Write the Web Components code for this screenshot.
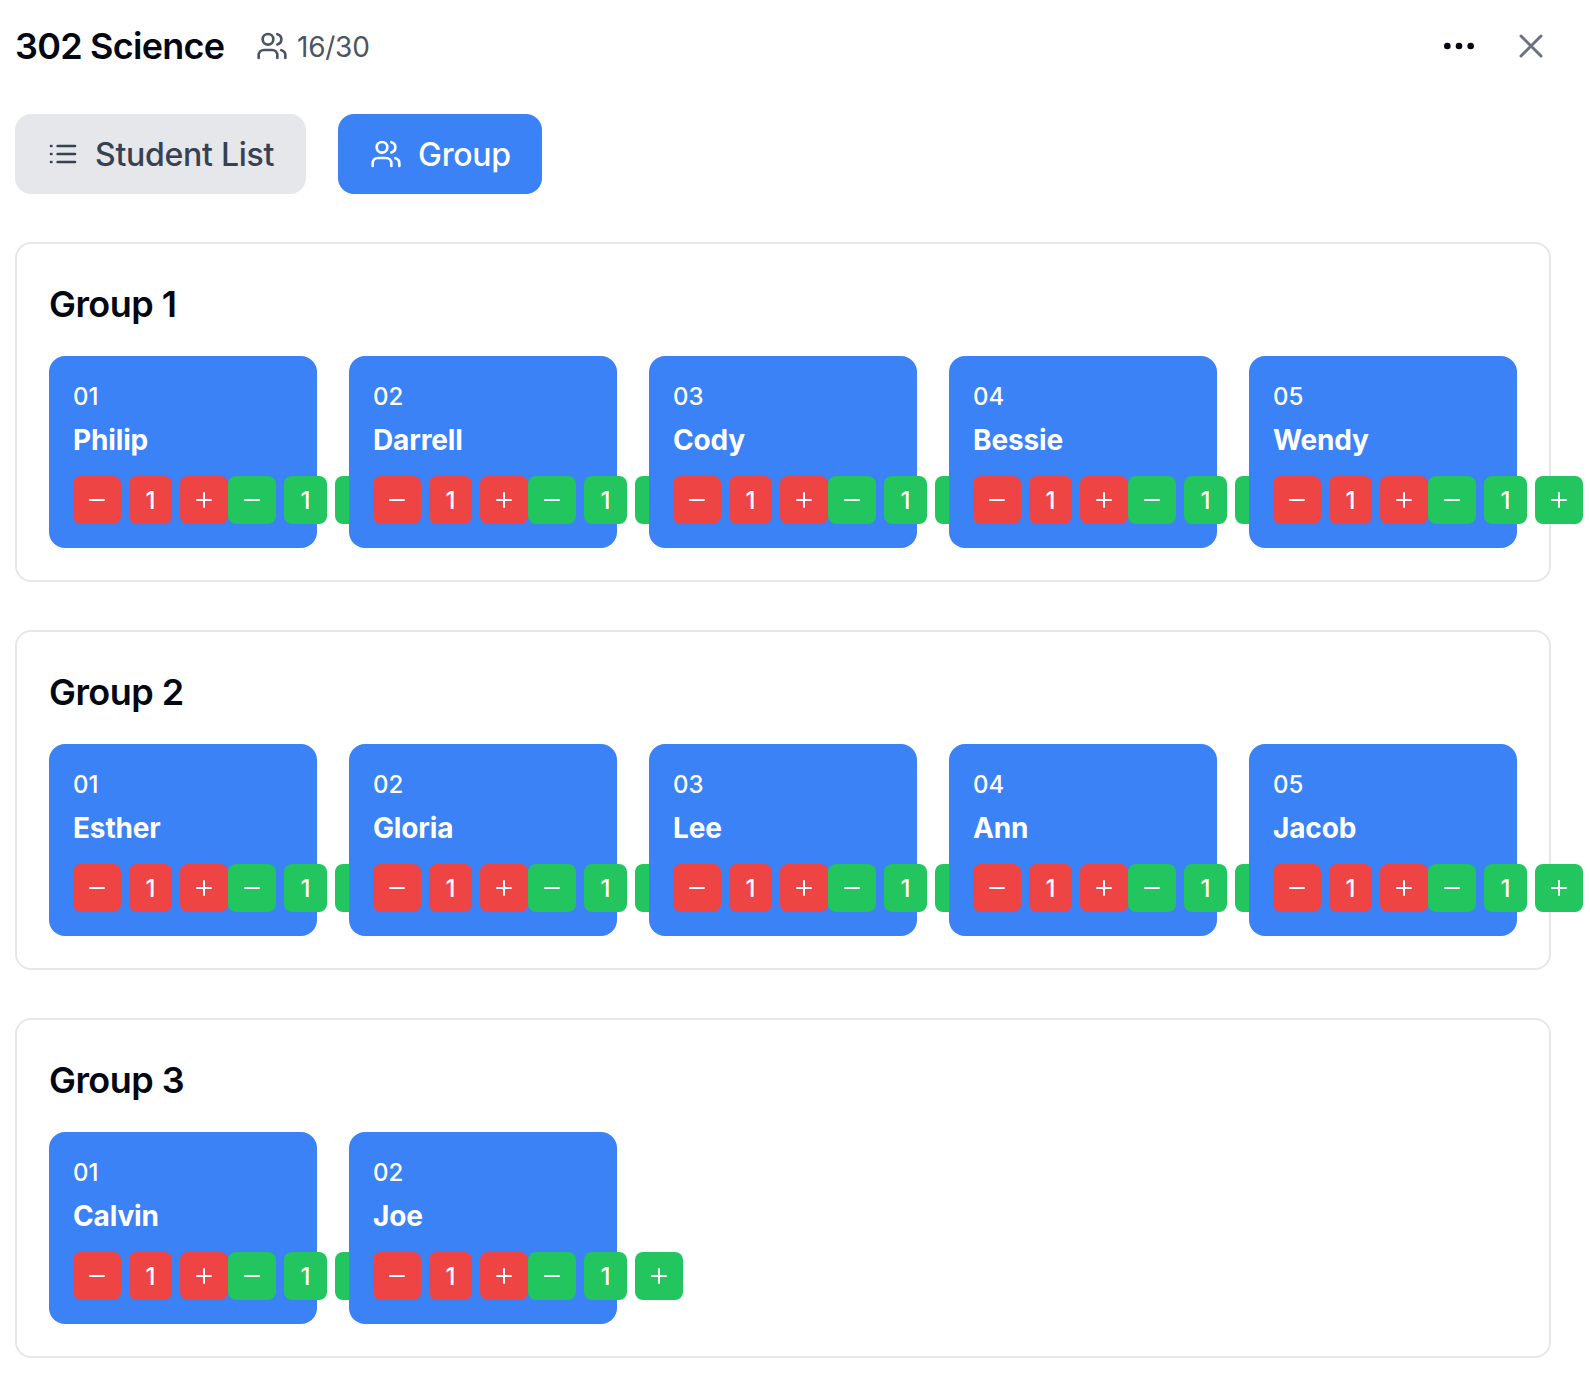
<!DOCTYPE html>
<html lang="en">
<head>
<meta charset="utf-8">
<title>302 Science</title>
<style>
html,body{margin:0;background:#fff}
body{font-family:Inter,"Liberation Sans",sans-serif;color:#030712;width:1590px;height:1380px;overflow:hidden}
</style>
</head>
<body>
<class-panel></class-panel>
<script>
const ICONS = {
  users: '<path d="M16 21v-2a4 4 0 0 0-4-4H6a4 4 0 0 0-4 4v2"/><circle cx="9" cy="7" r="4"/><path d="M22 21v-2a4 4 0 0 0-3-3.87"/><path d="M16 3.13a4 4 0 0 1 0 7.75"/>',
  list: '<path d="M8 6h13M8 12h13M8 18h13M3 6h.3M3 12h.3M3 18h.3"/>',
  more: '<g fill="currentColor"><circle cx="12" cy="12" r="1"/><circle cx="19" cy="12" r="1"/><circle cx="5" cy="12" r="1"/></g>',
  close: '<path d="M18 6 6 18M6 6l12 12"/>',
  minus: '<path d="M5 12h14"/>',
  plus: '<path d="M5 12h14M12 5v14"/>'
};
class Base extends HTMLElement {
  render(html) { this.attachShadow({mode: 'open'}).innerHTML = html; }
}
customElements.define('ui-icon', class extends Base {
  connectedCallback() {
    const s = this.getAttribute('size') || 24, w = this.getAttribute('weight') || 2;
    this.render(`<style>:host{display:block;flex:none;width:${s}px;height:${s}px}svg{display:block;width:100%;height:100%}</style>
    <svg viewBox="0 0 24 24" fill="none" stroke="currentColor" stroke-width="${w}" stroke-linecap="round" stroke-linejoin="round">${ICONS[this.getAttribute('name')]}</svg>`);
  }
});
customElements.define('tab-button', class extends Base {
  connectedCallback() {
    this.render(`<style>
    :host{display:flex;align-items:center;gap:16px;box-sizing:border-box;height:80px;width:291px;padding:0 32px;border-radius:16px;background:#e5e7eb;color:#374151;font-size:32px;font-weight:500;line-height:48px;letter-spacing:-.26px;white-space:nowrap}
    :host([active]){width:204px;background:#3b82f6;color:#fff}
    span{padding-top:2px}
    </style><ui-icon name="${this.getAttribute('icon')}" size="32"></ui-icon><span><slot></slot></span>`);
  }
});
customElements.define('score-stepper', class extends Base {
  connectedCallback() {
    this.render(`<style>
    :host{display:flex;gap:8px;flex:none;color:#fff}
    .b,.v{display:flex;align-items:center;justify-content:center;box-sizing:border-box;height:48px;width:48px;border-radius:8px;background:var(--tone)}
    .v{width:43px;font-size:24px;line-height:32px;font-weight:500;padding-top:2px}
    </style><div class="b"><ui-icon name="minus"></ui-icon></div><div class="v"><slot></slot></div><div class="b"><ui-icon name="plus"></ui-icon></div>`);
  }
});
customElements.define('student-card', class extends Base {
  connectedCallback() {
    this.render(`<style>
    :host{display:block;position:relative;box-sizing:border-box;width:268px;height:192px;padding:25px 24px 24px;border-radius:16px;background:#3b82f6;color:#fff}
    .n{font-size:24px;line-height:32px;font-weight:500}
    .name{font-size:28px;line-height:40px;font-weight:650;letter-spacing:-.15px;margin:7px 0 16px}
    .row{display:flex}
    .r{--tone:#ef4444}.g{--tone:#22c55e}
    </style><div class="n">${this.getAttribute('number')}</div><div class="name"><slot></slot></div>
    <div class="row"><score-stepper class="r">1</score-stepper><score-stepper class="g">1</score-stepper></div>`);
  }
});
customElements.define('group-box', class extends Base {
  connectedCallback() {
    this.render(`<style>
    :host{display:block;box-sizing:border-box;height:340px;border:2px solid #e5e7eb;border-radius:16px;padding:32px}
    h3{margin:0 0 24px;font-size:36px;line-height:56px;font-weight:600;letter-spacing:-.55px}
    .grid{display:grid;grid-template-columns:repeat(5,268px);gap:32px}
    </style><h3>${this.getAttribute('heading')}</h3><div class="grid"><slot></slot></div>`);
  }
});
customElements.define('class-panel', class extends Base {
  connectedCallback() {
    const groups = [['Philip','Darrell','Cody','Bessie','Wendy'],['Esther','Gloria','Lee','Ann','Jacob'],['Calvin','Joe']];
    this.render(`<style>
    :host{display:flex;flex-direction:column;gap:48px;box-sizing:border-box;width:1551px;padding-left:15px}
    header{display:flex;align-items:center;height:92px;margin-bottom:-26px}
    h2{margin:0;font-size:36px;line-height:56px;font-weight:600;letter-spacing:-.76px;white-space:nowrap;width:241px}
    .count{display:flex;align-items:center;gap:8px;color:#4b5563;font-size:28px;line-height:40px;flex:1}
    .count span{padding:2px 0 0 1px;letter-spacing:-.25px}
    .actions{display:flex;gap:32px}
    .close{color:#6b7280}
    nav{display:flex;gap:32px}
    </style>
    <header><h2>302 Science</h2><div class="count"><ui-icon name="users" size="32"></ui-icon><span>16/30</span></div>
    <div class="actions"><ui-icon name="more" size="40"></ui-icon><ui-icon class="close" name="close" size="40" weight="1.8"></ui-icon></div></header>
    <nav><tab-button icon="list">Student List</tab-button><tab-button icon="users" active>Group</tab-button></nav>
    ${groups.map((g, i) => `<group-box heading="Group ${i + 1}">${g.map((n, j) => `<student-card number="0${j + 1}">${n}</student-card>`).join('')}</group-box>`).join('')}`);
  }
});
</script>
</body>
</html>
